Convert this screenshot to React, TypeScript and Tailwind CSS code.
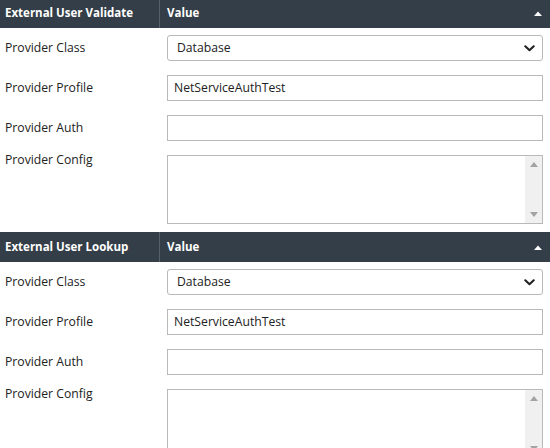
import React from "react";

const font = "font-['Open_Sans','Liberation_Sans',sans-serif]";

function Chevron() {
  return (
    <svg width="11" height="7" viewBox="0 0 11 7" className="shrink-0">
      <polyline points="1.3,1.3 5.5,5.2 9.7,1.3" fill="none" stroke="#222" strokeWidth="2.1" strokeLinecap="round" strokeLinejoin="round" />
    </svg>
  );
}

function Caret() {
  return (
    <svg width="8" height="5" viewBox="0 0 8 5" className="shrink-0">
      <polygon points="0,5 4,0.5 8,5" fill="#ffffff" />
    </svg>
  );
}

function Header({ title }: { title: string }) {
  return (
    <div className="flex h-[30px] bg-[#333e48] text-white text-[11.5px] font-bold">
      <div className="w-[160px] shrink-0 flex items-center pl-[5px] border-r border-[#56616a]">{title}</div>
      <div className="flex-1 flex items-center justify-between pl-[7px] pr-[8px]">
        <span>Value</span>
        <Caret />
      </div>
    </div>
  );
}

function Row({ label, children, tall }: { label: string; children: React.ReactNode; tall?: boolean }) {
  return (
    <div className={`flex ${tall ? "pt-[7px] pb-[8px]" : "py-[7px]"}`}>
      {tall ? (
        <div className="w-[160px] shrink-0 pl-[5px] text-[12.2px] leading-[16px] text-[#222] -mt-[3px]">{label}</div>
      ) : (
        <div className="w-[160px] shrink-0 pl-[5px] h-[26px] flex items-center text-[12.2px] text-[#222]">
          <span>{label}</span>
        </div>
      )}
      <div className="flex-1 pl-[7px] pr-[7px]">{children}</div>
    </div>
  );
}

function Section({ title }: { title: string }) {
  return (
    <div>
      <Header title={title} />
      <Row label="Provider Class">
        <div className="h-[26px] border border-[#b9b9b9] rounded-[3px] flex items-center justify-between pl-[9px] pr-[7px] text-[12.2px] text-[#222] bg-white">
          <span>Database</span>
          <Chevron />
        </div>
      </Row>
      <Row label="Provider Profile">
        <div className="h-[26px] border border-[#b9b9b9] flex items-center pl-[6px] text-[12.2px] text-[#222] bg-white">
          NetServiceAuthTest
        </div>
      </Row>
      <Row label="Provider Auth">
        <div className="h-[26px] border border-[#b9b9b9] bg-white" />
      </Row>
      <Row label="Provider Config" tall>
        <div className="h-[69px] border border-[#b9b9b9] bg-white flex justify-end">
          <div className="w-[17px] bg-[#f0f0f0] flex flex-col items-center justify-between py-[6px]">
            <svg width="8" height="5" viewBox="0 0 8 5"><polygon points="0,5 4,0 8,5" fill="#a3a3a3" /></svg>
            <svg width="8" height="5" viewBox="0 0 8 5"><polygon points="0,0 4,5 8,0" fill="#a3a3a3" /></svg>
          </div>
        </div>
      </Row>
    </div>
  );
}

export default function App() {
  return (
    <div className={`w-[550px] h-[448px] overflow-hidden bg-white ${font}`}>
      <div className="-mt-[2px]">
        <Section title="External User Validate" />
        <Section title="External User Lookup" />
      </div>
    </div>
  );
}
